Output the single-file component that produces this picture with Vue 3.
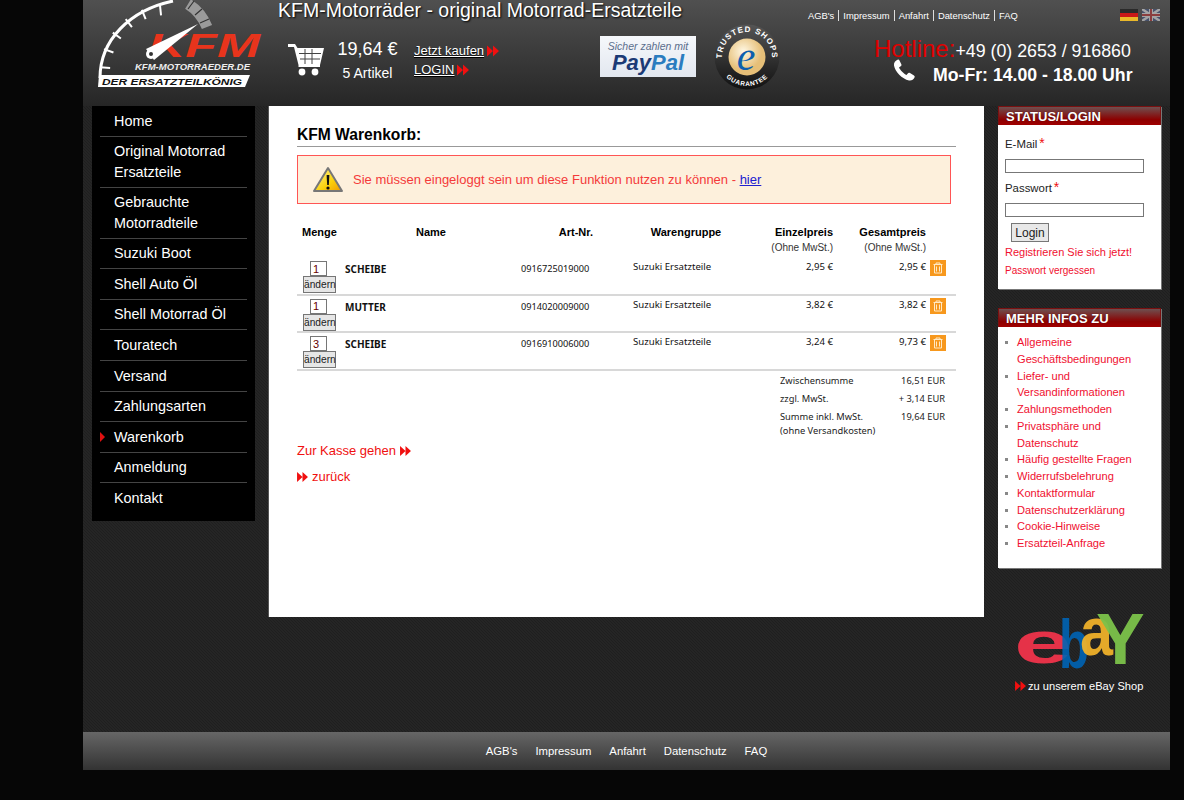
<script setup>
const menu = [
  ['Home'], ['Original Motorrad Ersatzteile'], ['Gebrauchte Motorradteile'], ['Suzuki Boot'], ['Shell Auto Öl'],
  ['Shell Motorrad Öl'], ['Touratech'], ['Versand'], ['Zahlungsarten'], ['Warenkorb', true], ['Anmeldung'], ['Kontakt']
]
const topLinks = ["AGB's", 'Impressum', 'Anfahrt', 'Datenschutz', 'FAQ']
const rows = [
  { q: '1', n: 'SCHEIBE', a: '0916725019000', e: '2,95 €', g: '2,95 €' },
  { q: '1', n: 'MUTTER', a: '0914020009000', e: '3,82 €', g: '3,82 €' },
  { q: '3', n: 'SCHEIBE', a: '0916910006000', e: '3,24 €', g: '9,73 €' }
]
const infos = ['Allgemeine Geschäftsbedingungen', 'Liefer- und Versandinformationen', 'Zahlungsmethoden', 'Privatsphäre und Datenschutz', 'Häufig gestellte Fragen', 'Widerrufsbelehrung', 'Kontaktformular', 'Datenschutzerklärung', 'Cookie-Hinweise', 'Ersatzteil-Anfrage']
const ticks = [176, 160, 144, 128, 112, 96].map((d) => {
  const r = (d * Math.PI) / 180
  return { x1: 70 + 67 * Math.cos(r), y1: 72 - 67 * Math.sin(r), x2: 70 + 57 * Math.cos(r), y2: 72 - 57 * Math.sin(r) }
})
</script>

<template>
  <div class="page">
    <header class="head">
      <svg class="logo" width="165" height="90" viewBox="0 0 165 90">
        <path d="M3 78C3 40 33 10 76 1" fill="none" stroke="#fff" stroke-width="3" />
        <line v-for="(t, i) in ticks" :key="i" :x1="t.x1" :y1="t.y1" :x2="t.x2" :y2="t.y2" stroke="#fff" stroke-width="2" />
        <path d="M91 4Q104 12 110 27" fill="none" stroke="#9a9a9a" stroke-width="11" />
        <path d="M97 1L91 9M105 9L98 15M112 19L103 23" stroke="#333" stroke-width="1.2" />
        <text x="51" y="57" class="lg-kfm" textLength="112" lengthAdjust="spacingAndGlyphs">KFM</text>
        <path d="M49 49L101 24L57 60Z" fill="#fff" />
        <circle cx="54" cy="54" r="5" fill="#fff" /><circle cx="54" cy="54" r="2" fill="#333" />
        <text x="38" y="70" class="lg-url" textLength="115" lengthAdjust="spacingAndGlyphs">KFM-MOTORRAEDER.DE</text>
        <path d="M2 75H153L148 87H1Z" fill="#fff" />
        <text x="5" y="84.5" class="lg-ban" textLength="140" lengthAdjust="spacingAndGlyphs">DER ERSATZTEILKÖNIG</text>
      </svg>

      <div class="mid">
        <div class="mid-l">
          <h1 class="title">KFM-Motorräder - original Motorrad-Ersatzteile</h1>
          <div class="shop">
            <svg class="cart" width="36" height="32" viewBox="0 0 36 32">
              <path d="M0 0H7L9.5 4H36L32 21H10.5L6 3H0Z" fill="#fff" />
              <path d="M11 9.5H33M12 15H32M17 5V20M24 5V20" stroke="#444" stroke-width="1" />
              <path d="M10.5 21H32V23H10.5Z" fill="#fff" />
              <circle cx="14" cy="28" r="3.4" fill="#fff" /><circle cx="27" cy="28" r="3.4" fill="#fff" />
            </svg>
            <div class="sum"><div class="amount">19,64 €</div><div class="count">5 Artikel</div></div>
            <div class="buy">
              <div class="buy-line"><a class="w-link">Jetzt kaufen</a><svg class="arr" width="12" height="12" viewBox="0 0 12 11"><path d="M0 0L6 5.5L0 11ZM6 0L12 5.5L6 11Z" /></svg></div>
              <div class="buy-line"><a class="w-link">LOGIN</a><svg class="arr" width="12" height="12" viewBox="0 0 12 11"><path d="M0 0L6 5.5L0 11ZM6 0L12 5.5L6 11Z" /></svg></div>
            </div>
            <div class="paypal"><div class="pp-top">Sicher zahlen mit</div><div class="pp-main"><span class="pp-a">Pay</span><span class="pp-b">Pal</span></div></div>
          </div>
        </div>
        <svg class="trust" width="66" height="66" viewBox="0 0 66 66">
          <defs>
            <path id="ts-top" d="M8 33A25 25 0 0 1 58 33" />
            <path id="ts-bot" d="M4 33A29 29 0 0 0 62 33" />
            <radialGradient id="ts-g" cx=".4" cy=".35"><stop offset="0" stop-color="#fff8e4" /><stop offset="1" stop-color="#e6bf78" /></radialGradient>
            <linearGradient id="ts-d" x1="0" y1="0" x2="0" y2="1"><stop offset="0" stop-color="#555" /><stop offset="1" stop-color="#111" /></linearGradient>
          </defs>
          <circle cx="33" cy="33" r="32.5" fill="url(#ts-d)" />
          <circle cx="33" cy="33" r="18.5" fill="url(#ts-g)" />
          <text class="ts-t"><textPath href="#ts-top" startOffset="50%" text-anchor="middle">TRUSTED SHOPS</textPath></text>
          <text class="ts-t ts-s"><textPath href="#ts-bot" startOffset="50%" text-anchor="middle">GUARANTEE</textPath></text>
          <text x="32" y="46" class="ts-e">e</text>
        </svg>
      </div>

      <div class="right">
        <div class="r-top">
          <nav class="tlinks"><a v-for="l in topLinks" :key="l">{{ l }}</a></nav>
          <div class="flags">
            <svg width="18" height="12" viewBox="0 0 18 12"><rect width="18" height="4" fill="#2a2a2a" /><rect y="4" width="18" height="4" fill="#c81818" /><rect y="8" width="18" height="4" fill="#eab82a" /></svg>
            <svg width="18" height="12" viewBox="0 0 18 12" opacity=".5"><rect width="18" height="12" fill="#44588c" /><path d="M0 0L18 12M18 0L0 12" stroke="#fff" stroke-width="2.4" /><path d="M9 0V12M0 6H18" stroke="#fff" stroke-width="4" /><path d="M9 0V12M0 6H18" stroke="#c33" stroke-width="2" /></svg>
          </div>
        </div>
        <div class="hot"><span class="hot-r">Hotline:</span><span class="hot-n">+49 (0) 2653 / 916860</span></div>
        <div class="hours">
          <svg width="22" height="22" viewBox="0 0 22 22"><path d="M5 0.5C2.5 1.5 0.5 3.5 1 6.5C2 12.5 9 20 16 21.5C18.5 22 20.5 20.5 21.5 18.5C22 17.5 21.5 17 21 16.5L17 14C16 13.5 15.5 13.5 15 14.2L13.5 16C11 15 7 11 6 8.5L8 7C8.7 6.4 8.7 6 8.2 5L6.2 1C5.8 0.4 5.5 0.3 5 0.5Z" fill="#fff" /></svg>
          <span class="h-t">Mo-Fr: 14.00 - 18.00 Uhr</span>
        </div>
      </div>
    </header>

    <main class="main">
      <nav class="side">
        <a v-for="m in menu" :key="m[0]" class="item"><span v-if="m[1]" class="mark"></span><span class="lbl">{{ m[0] }}</span></a>
      </nav>

      <section class="content">
        <h2 class="h2">KFM Warenkorb:</h2>
        <div class="alert">
          <svg width="32" height="28" viewBox="0 0 32 28">
            <defs><linearGradient id="w-g" x1="0" y1="0" x2="1" y2="1"><stop offset="0" stop-color="#fff6a0" /><stop offset=".6" stop-color="#fbd20c" /><stop offset="1" stop-color="#ef9a00" /></linearGradient></defs>
            <path d="M16 2L30 25H2Z" fill="url(#w-g)" stroke="#777" stroke-width="2" stroke-linejoin="round" />
            <path d="M14.6 9H17.4L16.8 19H15.2Z" fill="#111" /><circle cx="16" cy="22" r="1.6" fill="#111" />
          </svg>
          <span>Sie müssen eingeloggt sein um diese Funktion nutzen zu können - <a class="hier">hier</a></span>
        </div>

        <div class="grid ghead">
          <div class="c-q">Menge</div><div class="c-n">Name</div><div class="c-a">Art-Nr.</div><div class="c-g">Warengruppe</div>
          <div class="c-p">Einzelpreis<small>(Ohne MwSt.)</small></div><div class="c-p">Gesamtpreis<small>(Ohne MwSt.)</small></div><div></div>
        </div>
        <div v-for="(r, i) in rows" :key="i" class="grid row">
          <div class="qty"><input class="q-in" :value="r.q" /><button class="q-btn">ändern</button></div>
          <div class="name">{{ r.n }}</div>
          <div class="art">{{ r.a }}</div>
          <div class="grp">Suzuki Ersatzteile</div>
          <div class="pr">{{ r.e }}</div>
          <div class="pr">{{ r.g }}</div>
          <div class="del">
            <svg width="16" height="16" viewBox="0 0 16 16"><rect width="16" height="16" fill="#f7981d" /><path d="M3.5 4.5H12.5M6 4V3H10V4M4.5 5V13H11.5V5M6.5 6.5V11.5M9.5 6.5V11.5" fill="none" stroke="#ffe9c4" stroke-width="1" /></svg>
          </div>
        </div>

        <div class="totals">
          <div>Zwischensumme</div><div class="t-r">16,51 EUR</div>
          <div>zzgl. MwSt.</div><div class="t-r">+ 3,14 EUR</div>
          <div>Summe inkl. MwSt.<br />(ohne Versandkosten)</div><div class="t-r">19,64 EUR</div>
        </div>

        <div class="action a1">Zur Kasse gehen <svg class="arr2" width="11" height="10" viewBox="0 0 12 11"><path d="M0 0L6 5.5L0 11ZM6 0L12 5.5L6 11Z" /></svg></div>
        <div class="action a2"><svg class="arr2" width="11" height="10" viewBox="0 0 12 11"><path d="M0 0L6 5.5L0 11ZM6 0L12 5.5L6 11Z" /></svg> zurück</div>
      </section>

      <aside class="rcol">
        <div class="panel p-login">
          <div class="p-h">STATUS/LOGIN</div>
          <div class="p-b">
            <div class="lab">E-Mail<span class="star">*</span></div>
            <input class="fld" />
            <div class="lab lab2">Passwort<span class="star">*</span></div>
            <input class="fld" type="password" />
            <button class="login">Login</button>
            <div class="reg">Registrieren Sie sich jetzt!</div>
            <div class="forgot">Passwort vergessen</div>
          </div>
        </div>
        <div class="panel p-info">
          <div class="p-h">MEHR INFOS ZU</div>
          <ul class="list"><li v-for="t in infos" :key="t">{{ t }}</li></ul>
        </div>
        <div class="ebay">
          <svg class="eb-svg" width="130" height="58" viewBox="0 0 130 58">
            <g class="eb">
              <text x="-1" y="51" fill="#e53248" font-size="60" textLength="58" lengthAdjust="spacingAndGlyphs">e</text>
              <text x="44" y="56" fill="#0064b4" font-size="69" textLength="30" lengthAdjust="spacingAndGlyphs" opacity=".9">b</text>
              <text x="65" y="43" fill="#f5b52a" font-size="68" textLength="33" lengthAdjust="spacingAndGlyphs" opacity=".92">a</text>
              <text x="81" y="52" fill="#7cc24a" font-size="73" opacity=".95">Y</text>
            </g>
          </svg>
          <div class="eb-l"><svg class="arr" width="11" height="10" viewBox="0 0 12 11"><path d="M0 0L6 5.5L0 11ZM6 0L12 5.5L6 11Z" /></svg> zu unserem eBay Shop</div>
        </div>
      </aside>
    </main>

    <footer class="foot"><a v-for="l in topLinks" :key="l">{{ l }}</a></footer>
  </div>
</template>

<style>
html, body { margin: 0; background: #060606; }
</style>

<style scoped>
.page { margin-left: 83px; width: 1087px; height: 770px; display: flex; flex-direction: column; font-family: "Liberation Sans", Arial, sans-serif; background-color: #222; background-image: linear-gradient(45deg, #252525 25%, #1f1f1f 25%, #1f1f1f 50%, #252525 50%, #252525 75%, #1f1f1f 75%); background-size: 3px 3px; overflow: hidden; }
.head { height: 106px; flex: none; display: flex; background: linear-gradient(#505050, #262626); color: #fff; }
.logo { margin-left: 14px; flex: none; display: block; }
.lg-kfm { font: italic 900 33px "Liberation Sans", sans-serif; fill: #e8341c; }
.lg-url { font: italic 700 8.5px "Liberation Sans", sans-serif; fill: #eee; }
.lg-ban { font: italic 700 9px "Liberation Sans", sans-serif; fill: #111; }
.mid { margin-left: 16px; width: 530px; flex: none; display: flex; }
.mid-l { width: 436px; flex: none; }
.title { margin: 0; font-size: 19.5px; font-weight: 400; line-height: 21px; white-space: nowrap; text-shadow: 1px 1px 2px #000; }
.shop { display: flex; margin-top: 15px; }
.cart { margin: 8px 0 0 10px; flex: none; }
.sum { width: 77px; margin-left: 13px; text-align: center; flex: none; }
.amount { font-size: 18px; line-height: 26px; width: 61px; white-space: nowrap; }
.count { font-size: 14px; line-height: 18px; margin-top: 2px; width: 61px; white-space: nowrap; }
.buy { margin-top: 5px; flex: none; width: 186px; font-size: 13px; }
.buy-line { display: flex; align-items: center; gap: 3px; height: 19px; }
.w-link { color: #fff; text-decoration: underline; text-shadow: 0 1px 1px #000; }
.arr { fill: #f01010; flex: none; }
.paypal { width: 96px; height: 41px; flex: none; background: linear-gradient(#f6f8fb, #e2e7ef); text-align: center; box-sizing: border-box; padding-top: 4px; }
.pp-top { font: italic 10.5px/12px "Liberation Sans", sans-serif; color: #5a6e8c; }
.pp-main { font: italic 700 22px/22px "Liberation Sans", sans-serif; }
.pp-a { color: #1b3a75; }
.pp-b { color: #2a7cbf; }
.trust { margin-top: 24px; flex: none; }
.ts-t { font: 700 8px "Liberation Sans", sans-serif; fill: #fff; letter-spacing: 1px; }
.ts-s { font-size: 6.5px; letter-spacing: .6px; }
.ts-e { font: italic 400 42px "Liberation Serif", serif; fill: #0d5fae; text-anchor: middle; }
.right { flex: 1; min-width: 0; }
.r-top { display: flex; height: 30px; }
.tlinks { display: flex; margin-top: 10px; height: 11px; font-size: 9.4px; line-height: 11px; }
.tlinks a { padding: 0 4px; border-left: 1px solid #ddd; white-space: nowrap; }
.tlinks a:first-child { border-left: 0; padding-left: 0; }
.flags { display: flex; gap: 4px; margin: 9px 0 0 98px; }
.flags svg { display: block; }
.hot { margin: 6px 0 0 66px; white-space: nowrap; line-height: 26px; }
.hot-r { color: #e00000; font-size: 24px; }
.hot-n { font-size: 17.8px; }
.hours { display: flex; align-items: center; margin: -3px 0 0 85px; height: 26px; }
.hours svg { margin-top: -10px; flex: none; }
.h-t { margin-left: 18px; font-weight: 700; font-size: 17.7px; white-space: nowrap; }
.main { flex: 1; display: flex; padding-left: 9px; gap: 14px; align-items: flex-start; min-height: 0; }
.side { width: 163px; flex: none; background: #000; padding: 0 8px 8px; box-sizing: border-box; color: #fff; font-size: 14.4px; line-height: 20.4px; }
.item { display: flex; position: relative; padding: 4.6px 0 4.6px 14px; border-bottom: 1px solid #444; }
.item:last-child { border-bottom: 0; }
.lbl { width: 125px; }
.mark { position: absolute; left: 0; top: 10px; border-left: 5px solid #e01010; border-top: 5px solid transparent; border-bottom: 5px solid transparent; }
.content { width: 715px; height: 511px; flex: none; background: #fff; box-sizing: border-box; padding: 20px 28px 0; box-shadow: -1px 0 0 #555; color: #000; }
.h2 { margin: 0; height: 21px; font-size: 15.6px; font-weight: 700; line-height: 18px; border-bottom: 1px solid #999; box-sizing: border-box; }
.alert { width: 654px; height: 49px; box-sizing: border-box; margin-top: 8px; display: flex; align-items: center; gap: 9px; padding-left: 14px; border: 1px solid #f55; background: #fdf0dc; color: #f43a3a; font-size: 13px; }
.hier { color: #2020d0; text-decoration: underline; }
.grid { display: grid; grid-template-columns: 48px 176px 112px 110px 90px 93px 30px; width: 659px; }
.ghead { margin-top: 20px; height: 34px; font-size: 11px; font-weight: 700; line-height: 16px; }
.c-q { padding-left: 5px; }
.c-n { text-align: center; padding-right: 4px; }
.c-a { text-align: right; padding-right: 40px; }
.c-g { text-align: center; padding-right: 4px; }
.c-p { text-align: right; white-space: nowrap; }
.c-p small { display: block; font-size: 10px; font-weight: 400; color: #333; line-height: 16px; font-family: "Liberation Sans", sans-serif; }
.row { height: 37.6px; box-sizing: border-box; border-bottom: 2px solid #d8d8d8; font: 10px/14px "Noto Sans", Tahoma, sans-serif; color: #111; }
.qty { display: flex; flex-direction: column; align-items: flex-start; padding: 3px 0 0 6px; }
.q-in { width: 17px; height: 15px; box-sizing: border-box; margin-left: 7px; padding: 0 2px; border: 1px solid #767676; font: 11px "Liberation Sans", sans-serif; color: #600; background: #fff; display: block; }
.q-btn { width: 33px; height: 17px; box-sizing: border-box; padding: 0; margin: 0; border: 1px solid #767676; background: #e6e6e6; font: 10.2px "Liberation Sans", sans-serif; color: #222; }
.name { font-weight: 700; padding-top: 4px; }
.art { padding-top: 4px; font-size: 9.2px; }
.grp { padding-top: 2px; font-size: 9.6px; }
.pr { text-align: right; padding-top: 2px; font-size: 9.6px; }
.del { padding: 2px 0 0 4px; }
.del svg { display: block; }
.totals { display: grid; grid-template-columns: 110px 55px; justify-content: start; margin: 3px 0 0 483px; font: 9.3px/14px "Noto Sans", Tahoma, sans-serif; color: #222; row-gap: 4px; }
.t-r { text-align: right; white-space: nowrap; }
.action { color: #f01010; font-size: 13px; line-height: 18px; display: flex; align-items: center; gap: 4px; }
.arr2 { fill: #f01010; }
.a1 { margin-top: 4px; }
.a2 { margin-top: 8px; }
.rcol { width: 163px; flex: none; }
.panel { background: #fff; box-shadow: 1px 1px 0 #777; }
.p-h { height: 19px; box-sizing: border-box; padding-left: 7px; font-size: 13px; font-weight: 700; line-height: 19px; color: #fff; background: linear-gradient(#6e5050, #8c0000 70%, #a00000); border: 1px solid #7a1010; border-bottom: 0; text-shadow: 0 0 1px #300; }
.p-login { height: 183px; }
.p-b { padding: 0 7px; font-size: 11.4px; color: #222; }
.lab { line-height: 14px; padding-top: 11px; }
.lab2 { padding-top: 7px; }
.star { color: #f01010; margin-left: 2px; font-size: 14px; }
.fld { display: block; width: 139px; height: 14px; box-sizing: border-box; margin-top: 8px; border: 1px solid #777; padding: 0; background: #fff; }
.login { display: block; margin: 6px 0 0 6px; width: 38px; height: 19px; box-sizing: border-box; padding: 0; border: 1px solid #777; background: #e8e8e8; font: 12px "Liberation Sans", sans-serif; color: #222; }
.reg { margin-top: 3px; color: #f01030; font-size: 11px; line-height: 14px; white-space: nowrap; }
.forgot { margin-top: 5px; color: #f01030; font-size: 10px; line-height: 14px; }
.p-info { margin-top: 19px; height: 260px; }
.list { margin: 0; padding: 7px 0 0 19px; list-style: none; color: #f01030; font-size: 11.1px; line-height: 16.75px; }
.list li { position: relative; }
.list li::before { content: ""; position: absolute; left: -12px; top: 7px; width: 3px; height: 3px; background: #888; }
.ebay { margin: 44px 0 0 17px; }
.eb-svg { display: block; overflow: visible; }
.eb { font-family: "Liberation Sans", sans-serif; font-weight: 700; }
.eb-l { margin: 9px 0 0 0; color: #fff; font-size: 11.1px; line-height: 14px; white-space: nowrap; display: flex; align-items: center; gap: 2px; }
.foot { height: 38px; flex: none; display: flex; justify-content: center; align-items: center; gap: 18px; box-sizing: border-box; background: linear-gradient(#666, #333); color: #fff; font-size: 11.3px; }
</style>
